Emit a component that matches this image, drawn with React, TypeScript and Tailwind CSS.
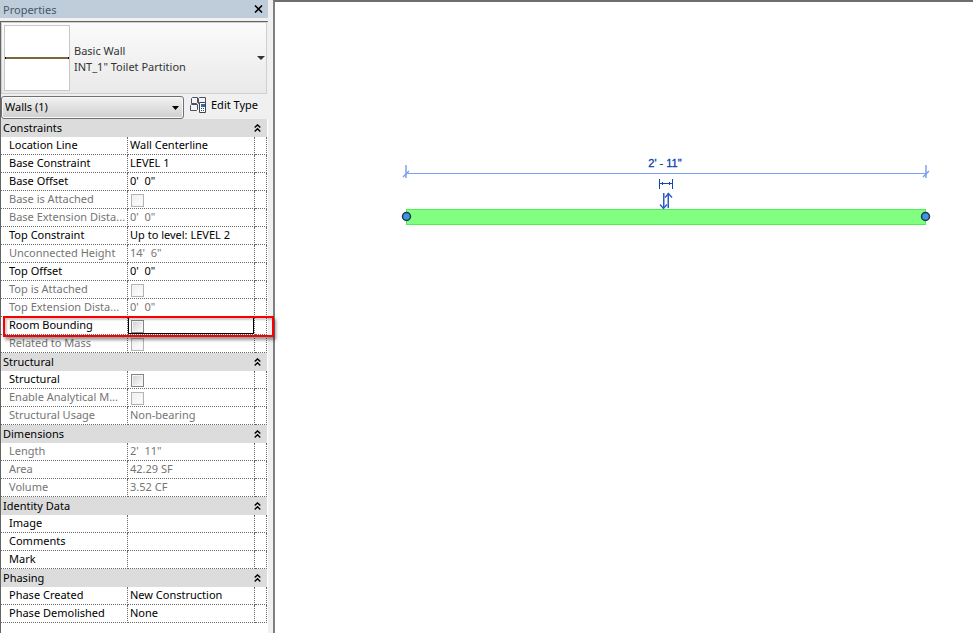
import { Fragment } from "react";

type Value = string | boolean;
type Property = { label: string; value: Value; disabled?: boolean; active?: boolean };
type Group = { title: string; rows: Property[] };

const groups: Group[] = [
  {
    title: "Constraints",
    rows: [
      { label: "Location Line", value: "Wall Centerline" },
      { label: "Base Constraint", value: "LEVEL 1" },
      { label: "Base Offset", value: "0'  0\"" },
      { label: "Base is Attached", value: false, disabled: true },
      { label: "Base Extension Dista...", value: "0'  0\"", disabled: true },
      { label: "Top Constraint", value: "Up to level: LEVEL 2" },
      { label: "Unconnected Height", value: "14'  6\"", disabled: true },
      { label: "Top Offset", value: "0'  0\"" },
      { label: "Top is Attached", value: false, disabled: true },
      { label: "Top Extension Dista...", value: "0'  0\"", disabled: true },
      { label: "Room Bounding", value: false, active: true },
      { label: "Related to Mass", value: false, disabled: true },
    ],
  },
  {
    title: "Structural",
    rows: [
      { label: "Structural", value: false },
      { label: "Enable Analytical M...", value: false, disabled: true },
      { label: "Structural Usage", value: "Non-bearing", disabled: true },
    ],
  },
  {
    title: "Dimensions",
    rows: [
      { label: "Length", value: "2'  11\"", disabled: true },
      { label: "Area", value: "42.29 SF", disabled: true },
      { label: "Volume", value: "3.52 CF", disabled: true },
    ],
  },
  {
    title: "Identity Data",
    rows: [
      { label: "Image", value: "" },
      { label: "Comments", value: "" },
      { label: "Mark", value: "" },
    ],
  },
  {
    title: "Phasing",
    rows: [
      { label: "Phase Created", value: "New Construction" },
      { label: "Phase Demolished", value: "None" },
    ],
  },
];

function CollapseIcon() {
  return (
    <svg width="7" height="8" viewBox="0 0 7 8" fill="none" stroke="#000" strokeWidth="1.4" aria-hidden="true">
      <path d="M0.7 3.6 3.5 0.9 6.3 3.6M0.7 7.4 3.5 4.7 6.3 7.4" />
    </svg>
  );
}

function EditTypeIcon() {
  return (
    <svg width="17" height="17" viewBox="0 0 17 17" fill="none" aria-hidden="true">
      <g fill="#f4f4f6" stroke="#4a4f5e">
        <path d="M2.5 1.500 1.500 2.500v5h5l1-1v-5z" />
        <path d="M9.500 1.500l-1 1v5h6l1-1v-5z" />
        <path d="M1.500 8.500l-1 1v5h6l1-1v-5z" />
      </g>
      <path d="M9.500 6.500h6v10h-6z" fill="#fff" stroke="#3f4455" />
      <path d="M11 8h4v3h-4z" fill="#2b69b8" />
      <path d="M11 12.500h1M13 12.500h1M11 14.500h1M13 14.500h1" stroke="#3f4455" />
    </svg>
  );
}

function PropertyRow({ id, row }: { id: string; row: Property }) {
  const tone = row.disabled ? "text-[#757575]" : "text-black";
  return (
    <tr className="relative h-[18px] bg-white">
      <th scope="row" className={`h-[18px] border-r border-b border-dotted border-[#696969] p-0 text-left font-normal ${tone}`}>
        <label htmlFor={id} className="block h-[17px] overflow-hidden pl-2 leading-4 whitespace-nowrap">
          {row.label}
        </label>
      </th>
      <td className="h-[18px] border-r border-b border-dotted border-[#696969] p-0">
        <div className={`flex h-[17px] items-start ${row.active ? "border border-t-0 border-black pl-0.5" : typeof row.value === "boolean" ? "pl-[3px]" : "pl-0.5"}`}>
          {typeof row.value === "boolean" ? (
            <input
              id={id}
              type="checkbox"
              disabled={row.disabled}
              className={`mt-[3px] size-[13px] appearance-none border bg-linear-to-br to-white shadow-[inset_0_0_0_1px_#f4f4f4] ${row.disabled ? "border-[#b4b4b4] from-[#eeeeee]" : "border-[#858585] from-[#cfcfcf]"}`}
            />
          ) : (
            <input
              id={id}
              type="text"
              defaultValue={row.value}
              disabled={row.disabled}
              className={`h-4 w-full min-w-0 bg-transparent p-0 leading-4 outline-none ${tone}`}
            />
          )}
        </div>
      </td>
      <td className="h-[18px] border-r border-b border-dotted border-[#696969] p-0">
        {row.active && (
          <div className="pointer-events-none absolute -top-px -right-[7px] -bottom-0.5 left-0.5 z-10 border-2 border-[#fa0000] shadow-[2px_3px_3px_rgba(0,0,0,0.4),inset_2px_2px_2px_rgba(0,0,0,0.2)]" />
        )}
      </td>
    </tr>
  );
}

function PropertiesPanel() {
  return (
    <aside className="flex w-[268px] shrink-0 flex-col bg-[#f0f0f0]">
      <header className="flex h-[18px] items-center justify-between bg-[#bfcddb] pr-1 pl-[3px] text-[#46586a]">
        <h1 className="pt-0.5">Properties</h1>
        <button type="button" aria-label="Close" className="p-px">
          <svg width="9" height="8" viewBox="0 0 9 8" stroke="#000" strokeWidth="1.6" aria-hidden="true">
            <path d="M1 0.5 8 7.5M8 0.5 1 7.5" />
          </svg>
        </button>
      </header>

      <div className="mt-[3px] flex grow flex-col border-t border-l border-[#646464]">
        <button
          type="button"
          className="flex h-[72px] w-[266px] items-center border border-[#cfcfcf] bg-linear-to-b from-[#fbfbfb] to-[#e9e9e9] pr-px pl-0.5 text-left text-[#333]"
        >
          <span className="flex size-[66px] items-center border border-[#c8c8c8] bg-white">
            <span className="h-0.5 w-full border-x border-black bg-[#7d6839]" />
          </span>
          <span className="ml-1 grow pt-0.5 leading-4">
            Basic Wall
            <br />
            INT_1" Toilet Partition
          </span>
          <svg width="8" height="4" viewBox="0 0 8 4" aria-hidden="true">
            <path d="M0 0h8L4 4z" fill="#333" />
          </svg>
        </button>

        <div className="flex h-[25px] items-center">
          <div className="relative">
            <select
              aria-label="Element filter"
              className="mt-px block h-[23px] w-[183px] appearance-none rounded-[3px] border border-[#707070] bg-linear-to-b from-[#f2f2f2] to-[#cfcfcf] px-[3px] text-black shadow-[inset_0_0_0_1px_#f8f8f8]"
            >
              <option>Walls (1)</option>
            </select>
            <svg className="pointer-events-none absolute top-[11px] right-[5px]" width="7" height="4" viewBox="0 0 7 4" aria-hidden="true">
              <path d="M0 0h7L3.5 4z" fill="#000" />
            </svg>
          </div>
          <button type="button" className="mb-1 ml-1.5 flex items-center gap-1 text-black">
            <EditTypeIcon />
            Edit Type
          </button>
        </div>

        <div className="grow bg-white">
          <table className="w-[266px] table-fixed border-separate border-spacing-0">
            <colgroup>
              <col className="w-[127px]" />
              <col className="w-[127px]" />
              <col className="w-3" />
            </colgroup>
            <tbody>
              {groups.map((group) => (
                <Fragment key={group.title}>
                  <tr>
                    <th colSpan={3} className="h-[18px] bg-[#dcdcdc] p-0 text-left font-normal">
                      <button type="button" className="flex h-[18px] w-full items-center justify-between pr-1.5 pl-0.5 text-black">
                        {group.title}
                        <CollapseIcon />
                      </button>
                    </th>
                  </tr>
                  {group.rows.map((row) => (
                    <PropertyRow key={row.label} row={row} id={row.label.toLowerCase().replace(/[^a-z]+/g, "-") + "-field"} />
                  ))}
                </Fragment>
              ))}
            </tbody>
          </table>
        </div>
      </div>
    </aside>
  );
}

function PlanView() {
  return (
    <main className="min-w-0 grow border-t-2 border-l-2 border-t-[#6e6e6e] border-l-[#808080] bg-white">
      <svg className="block h-full w-full" role="img" aria-label="Wall plan, 2' - 11&quot;">
        <rect x="131.5" y="207.5" width="519" height="15" fill="#80ff80" stroke="#4df04d" />
        <g stroke="#7da0f5" fill="none">
          <path d="M131 171.5h520" />
          <path d="M131 163v13M651 163v13" strokeWidth="1.5" />
          <path d="M128 175l6-6M648 175l6-6" strokeWidth="1.5" />
        </g>
        <text x="390" y="165" textAnchor="middle" fontSize="11" fill="#0b40b0" stroke="#0b40b0" strokeWidth="0.3" fontFamily="Liberation Sans, sans-serif">
          2' - 11"
        </text>
        <g stroke="#1446b4" fill="none">
          <path d="M384.5 177v10M397.5 177v10M385 181.5h12" />
          <path d="M387.5 180v3M394.5 180v3" />
        </g>
        <g stroke="#2c5cc4" fill="none">
          <path d="M388.5 191v15M393.5 191v15" strokeWidth="1" />
          <path d="M389.500 191v15M392.500 191v15" strokeWidth="1" opacity="0.5" />
          <path d="M385 202.500l3.500 4 3.500-4M390 195.500l3.500-4 3.500 4" strokeWidth="1.4" />
        </g>
        <g fill="#3d96e0" stroke="#24384f" strokeWidth="1.5">
          <circle cx="131.5" cy="214.5" r="4" />
          <circle cx="650.5" cy="214.5" r="4" />
        </g>
      </svg>
    </main>
  );
}

export default function App() {
  return (
    <div className="flex min-h-screen bg-[#f0f0f0] font-['Noto_Sans','Open_Sans',sans-serif] text-[11px] leading-4">
      <PropertiesPanel />
      <div className="w-[5px] shrink-0" />
      <PlanView />
    </div>
  );
}
